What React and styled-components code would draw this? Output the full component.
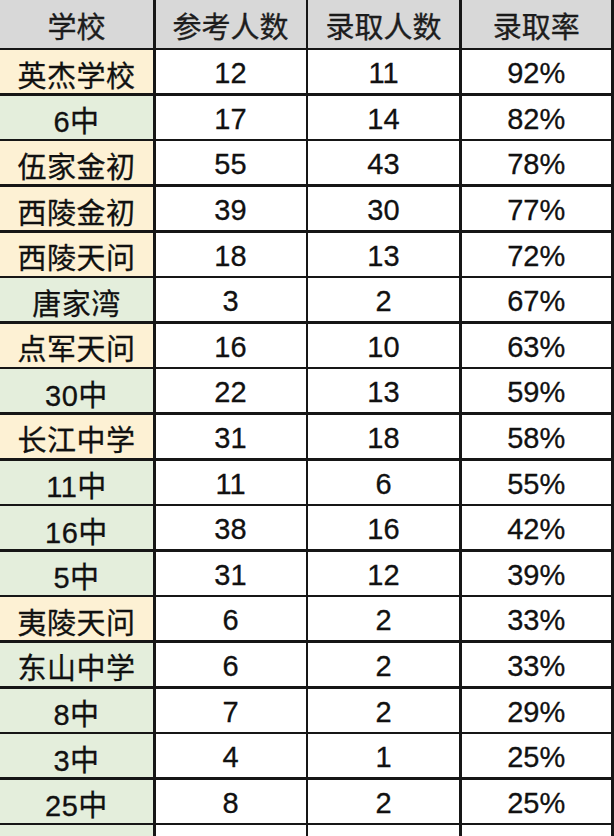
import { Fragment } from 'react';
import styled, { createGlobalStyle } from 'styled-components';

const GlobalStyle = createGlobalStyle`
  html, body {
    margin: 0;
    padding: 0;
    background: #ffffff;
  }
`;

const Page = styled.div`
  width: 614px;
  height: 836px;
  overflow: hidden;
  background: #ffffff;
`;

const Grid = styled.div`
  display: grid;
  grid-template-columns: 153px 150px 151px 149.5px;
  grid-template-rows: 47.7px;
  grid-auto-rows: 43.1px;
  gap: 2.5px;
  padding-right: 2.5px;
  padding-bottom: 2.5px;
  background: #161616;
  font-family: "Liberation Sans", "Noto Sans CJK SC", Arial, sans-serif;
  font-size: 29px;
  color: #111111;
  -webkit-text-stroke: 0.3px #111111;
`;

const Cell = styled.div`
  display: flex;
  align-items: center;
  justify-content: center;
  padding-top: 4px;
  box-sizing: border-box;
  white-space: nowrap;
  background: ${({ $tone }) =>
    $tone === 'head' ? '#d8d8d8' :
    $tone === 'yellow' ? '#fdf1d4' :
    $tone === 'green' ? '#e4eedc' : '#ffffff'};
`;

const HeadCell = styled(Cell)`
  color: #1e1e1e;
  padding-top: 3px;
`;

const SchoolName = styled.span`
  letter-spacing: 0.5px;
`;

const headers = ['学校', '参考人数', '录取人数', '录取率'];

const rows = [
  ['英杰学校', 12, 11, '92%', 'yellow'],
  ['6中', 17, 14, '82%', 'green'],
  ['伍家金初', 55, 43, '78%', 'yellow'],
  ['西陵金初', 39, 30, '77%', 'yellow'],
  ['西陵天问', 18, 13, '72%', 'yellow'],
  ['唐家湾', 3, 2, '67%', 'green'],
  ['点军天问', 16, 10, '63%', 'yellow'],
  ['30中', 22, 13, '59%', 'green'],
  ['长江中学', 31, 18, '58%', 'yellow'],
  ['11中', 11, 6, '55%', 'green'],
  ['16中', 38, 16, '42%', 'green'],
  ['5中', 31, 12, '39%', 'green'],
  ['夷陵天问', 6, 2, '33%', 'yellow'],
  ['东山中学', 6, 2, '33%', 'green'],
  ['8中', 7, 2, '29%', 'green'],
  ['3中', 4, 1, '25%', 'green'],
  ['25中', 8, 2, '25%', 'green'],
  ['', '', '', '', 'green'],
];

export default function App() {
  return (
    <Page>
      <GlobalStyle />
      <Grid>
        {headers.map((h) => (
          <HeadCell key={h} $tone="head">{h}</HeadCell>
        ))}
        {rows.map(([name, taken, admitted, rate, tone], i) => (
          <Fragment key={i}>
            <Cell $tone={tone}><SchoolName>{name}</SchoolName></Cell>
            <Cell>{taken}</Cell>
            <Cell>{admitted}</Cell>
            <Cell>{rate}</Cell>
          </Fragment>
        ))}
      </Grid>
    </Page>
  );
}
